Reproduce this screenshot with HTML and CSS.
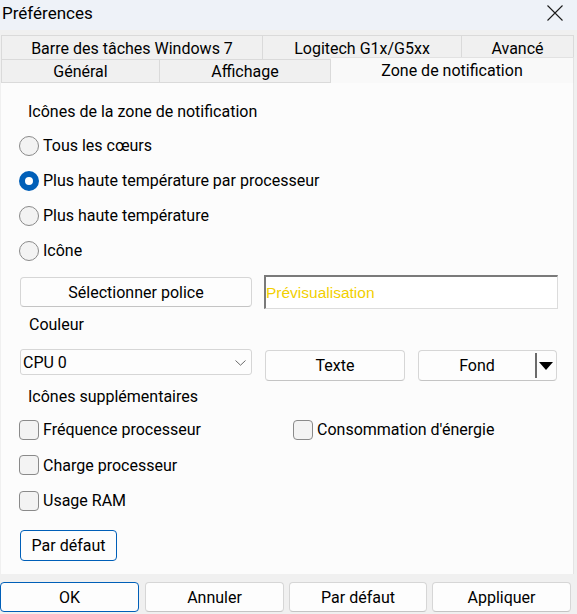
FILE: index.html
```html
<!DOCTYPE html>
<html lang="fr">
<head>
<meta charset="utf-8">
<title>Préférences</title>
<link rel="stylesheet" href="styles.css">
</head>
<body>
<div class="dialog">
  <header class="titlebar">
    <span class="title">Préférences</span>
    <svg class="close" width="16" height="16" viewBox="0 0 16 16" aria-label="Fermer"><path d="M0.5 0.5L15.5 15.5M15.5 0.5L0.5 15.5" stroke="#1b1b1b" stroke-width="1.1" fill="none"/></svg>
  </header>
  <nav class="tabs">
    <div class="tabrow row1">
      <div class="tab t-barre">Barre des tâches Windows 7</div>
      <div class="tab t-logi">Logitech G1x/G5xx</div>
      <div class="tab t-avance">Avancé</div>
    </div>
    <div class="tabrow row2">
      <div class="tab t-general">Général</div>
      <div class="tab t-affichage">Affichage</div>
      <div class="tab t-zone active">Zone de notification</div>
    </div>
  </nav>
  <main class="panel">
    <div class="group-label first">Icônes de la zone de notification</div>
    <div class="radios">
      <div class="radio"><span class="rb"></span><span>Tous les cœurs</span></div>
      <div class="radio"><span class="rb checked"></span><span>Plus haute température par processeur</span></div>
      <div class="radio"><span class="rb"></span><span>Plus haute température</span></div>
      <div class="radio"><span class="rb"></span><span>Icône</span></div>
    </div>
    <div class="font-row">
      <div class="btn btn-font">Sélectionner police</div>
      <div class="preview">Prévisualisation</div>
    </div>
    <div class="group-label couleur">Couleur</div>
    <div class="color-row">
      <div class="select"><span>CPU 0</span><svg class="chev" width="11" height="6" viewBox="0 0 11 6"><path d="M0.5 0.5L5.5 5.2L10.5 0.5" stroke="#6a6a6a" stroke-width="1" fill="none"/></svg></div>
      <div class="btn btn-texte">Texte</div>
      <div class="btn btn-fond"><span class="fond-label">Fond</span><span class="sep"></span><span class="tri"></span></div>
    </div>
    <div class="group-label extra">Icônes supplémentaires</div>
    <div class="checks">
      <div class="check"><span class="cb"></span><span>Fréquence processeur</span></div>
      <div class="check"><span class="cb"></span><span>Consommation d'énergie</span></div>
      <div class="check"><span class="cb"></span><span>Charge processeur</span></div>
      <div class="check col1"><span class="cb"></span><span>Usage RAM</span></div>
    </div>
    <div class="btn btn-default primary">Par défaut</div>
  </main>
  <footer class="footer">
    <div class="btn fbtn primary b-ok">OK</div>
    <div class="btn fbtn b-annuler">Annuler</div>
    <div class="btn fbtn b-defaut">Par défaut</div>
    <div class="btn fbtn b-appliquer">Appliquer</div>
  </footer>
</div>
</body>
</html>
```

FILE: styles.css
```css
html, body {
  margin: 0;
  padding: 0;
}
body {
  background: #f0f0f0;
  font-family: Roboto, "Noto Sans", sans-serif;
  font-size: 16px;
  color: #000;
  width: 577px;
  height: 614px;
  overflow: hidden;
}
.dialog {
  width: 577px;
  height: 614px;
  display: flex;
  flex-direction: column;
}
.titlebar {
  height: 30px;
  background: #eef2f8;
  display: flex;
  align-items: center;
  justify-content: space-between;
  padding: 0 14px 0 2px;
  box-sizing: border-box;
}
.title {
  font-size: 17px;
  margin-top: -5px;
}
.close {
  margin-top: -4px;
}
.tabs {
  margin-top: 5px;
  margin-left: 1px;
}
.tabrow {
  display: flex;
  height: 24px;
}
.tab {
  box-sizing: border-box;
  height: 24px;
  display: flex;
  align-items: center;
  justify-content: center;
  background: #f0f0f0;
  border-top: 1px solid #dadada;
  border-right: 1px solid #dadada;
  border-bottom: 1px solid #dadada;
  padding-top: 1px;
}
.tab:first-child {
  border-left: 1px solid #dadada;
}
.t-barre { width: 262px; }
.t-logi { width: 199px; }
.t-avance { width: 112px; }
.t-general { width: 159px; }
.t-affichage { width: 171px; }
.row1 .tab { border-bottom: none; }
.tab.active {
  width: 243px;
  height: 26px;
  margin-top: -2px;
  background: #f9f9f9;
  border-bottom: none;
  border-color: #e2e2e2;
  padding-top: 0;
  padding-bottom: 1px;
}
.panel {
  box-sizing: border-box;
  width: 573px;
  height: 491px;
  margin-left: 1px;
  background: #fcfcfc;
  border-right: 1px solid #e4e4e4;
  padding: 17px 0 0 18px;
  display: flex;
  flex-direction: column;
  align-items: flex-start;
}
.group-label {
  height: 24px;
  line-height: 24px;
  margin-left: 9px;
  margin-top: 4px;
}
.group-label.first {
  margin-top: 0;
}
.group-label.couleur {
  margin-left: 10px;
}
.radios {
  margin-top: 4px;
  display: flex;
  flex-direction: column;
}
.radio {
  height: 35px;
  display: flex;
  align-items: center;
  gap: 4px;
}
.rb {
  box-sizing: border-box;
  width: 20px;
  height: 20px;
  border-radius: 50%;
  border: 1px solid #8a8a8a;
  background: #f3f3f3;
  flex: none;
}
.rb.checked {
  border: 6px solid #005fb8;
  background: #ffffff;
}
.font-row {
  margin-top: 7px;
  height: 34px;
  display: flex;
  align-items: center;
}
.btn {
  box-sizing: border-box;
  background: #fdfdfd;
  border: 1px solid #d6d6d6;
  border-bottom-color: #c4c4c4;
  border-radius: 4px;
  display: flex;
  align-items: center;
  justify-content: center;
}
.btn.primary {
  border-color: #005fb8;
}
.btn-font {
  width: 232px;
  height: 30px;
  margin-left: 1px;
}
.preview {
  box-sizing: border-box;
  width: 294px;
  height: 34px;
  margin-left: 12px;
  background: #ffffff;
  border-top: 2px solid #7a7a7a;
  border-left: 2px solid #7a7a7a;
  border-right: 1px solid #dcdcdc;
  border-bottom: 1px solid #dcdcdc;
  color: #f2cf00;
  font-family: "Liberation Sans", Arial, sans-serif;
  font-size: 15.5px;
  display: flex;
  align-items: center;
}
.color-row {
  margin-top: 12px;
  height: 32px;
  display: flex;
  align-items: flex-start;
}
.select {
  box-sizing: border-box;
  width: 232px;
  height: 26px;
  margin-left: 1px;
  background: #fdfdfd;
  border: 1px solid #d6d6d6;
  border-radius: 3px;
  display: flex;
  align-items: center;
  justify-content: space-between;
  padding: 0 5px 0 2px;
}
.chev {
  margin-top: 1px;
}
.btn-texte {
  width: 140px;
  height: 31px;
  margin-left: 13px;
  margin-top: 1px;
}
.btn-fond {
  width: 139px;
  height: 31px;
  margin-left: 13px;
  margin-top: 1px;
  justify-content: flex-start;
  padding-right: 3px;
}
.fond-label {
  flex: 1;
  text-align: center;
}
.sep {
  width: 2px;
  height: 25px;
  background: #6b6b6b;
  flex: none;
}
.tri {
  width: 0;
  height: 0;
  border-left: 7.5px solid transparent;
  border-right: 7.5px solid transparent;
  border-top: 8px solid #000;
  margin-left: 2px;
  flex: none;
}
.checks {
  margin-top: 3px;
  display: grid;
  grid-template-columns: 274px auto;
}
.check {
  height: 35.5px;
  display: flex;
  align-items: center;
  gap: 4px;
}
.check.col1 {
  grid-column: 1;
}
.cb {
  box-sizing: border-box;
  width: 20px;
  height: 20px;
  border-radius: 4px;
  border: 1px solid #8a8a8a;
  background: #f3f3f3;
  flex: none;
}
.btn-default {
  width: 97px;
  height: 31px;
  margin-top: 11.5px;
  margin-left: 1px;
}
.footer {
  margin-top: 8px;
  display: flex;
  height: 30px;
}
.fbtn {
  height: 30px;
}
.b-ok { width: 139px; }
.b-annuler { width: 139px; margin-left: 6px; }
.b-defaut { width: 138px; margin-left: 5px; }
.b-appliquer { width: 139px; margin-left: 5px; }
```
